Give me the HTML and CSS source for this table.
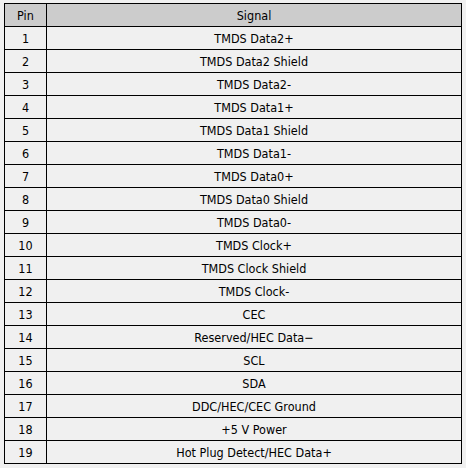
FILE: index.html
```html
<!DOCTYPE html>
<html>
<head>
<meta charset="utf-8">
<link rel="stylesheet" href="styles.css">
</head>
<body>
<table class="pins">
<thead>
<tr><th class="pin">Pin</th><th class="sig">Signal</th></tr>
</thead>
<tbody>
<tr><td>1</td><td>TMDS Data2+</td></tr>
<tr><td>2</td><td>TMDS Data2 Shield</td></tr>
<tr><td>3</td><td>TMDS Data2-</td></tr>
<tr><td>4</td><td>TMDS Data1+</td></tr>
<tr><td>5</td><td>TMDS Data1 Shield</td></tr>
<tr><td>6</td><td>TMDS Data1-</td></tr>
<tr><td>7</td><td>TMDS Data0+</td></tr>
<tr><td>8</td><td>TMDS Data0 Shield</td></tr>
<tr><td>9</td><td>TMDS Data0-</td></tr>
<tr><td>10</td><td>TMDS Clock+</td></tr>
<tr><td>11</td><td>TMDS Clock Shield</td></tr>
<tr><td>12</td><td>TMDS Clock-</td></tr>
<tr><td>13</td><td>CEC</td></tr>
<tr><td>14</td><td>Reserved/HEC Data−</td></tr>
<tr><td>15</td><td>SCL</td></tr>
<tr><td>16</td><td>SDA</td></tr>
<tr><td>17</td><td>DDC/HEC/CEC Ground</td></tr>
<tr><td>18</td><td>+5 V Power</td></tr>
<tr><td>19</td><td>Hot Plug Detect/HEC Data+</td></tr>
</tbody>
</table>
</body>
</html>
```
FILE: styles.css
```css
html, body {
  margin: 0;
  padding: 0;
  background: #f0f0f0;
}
body {
  padding: 3px 0 0 4px;
  font-family: "DejaVu Sans Condensed", "DejaVu Sans", Verdana, sans-serif;
  font-size: 12.5px;
  color: #000;
}
.pins {
  border-collapse: collapse;
  width: 458px;
  table-layout: fixed;
}
.pins th, .pins td {
  border: 1px solid #000;
  height: 21px;
  padding: 1px 0 0 0;
  text-align: center;
  vertical-align: middle;
  font-weight: normal;
  line-height: 14px;
}
.pins th {
  background: #cccccc;
}
.pins td {
  background: #f0f0f0;
}
.pin {
  width: 41px;
}
```
